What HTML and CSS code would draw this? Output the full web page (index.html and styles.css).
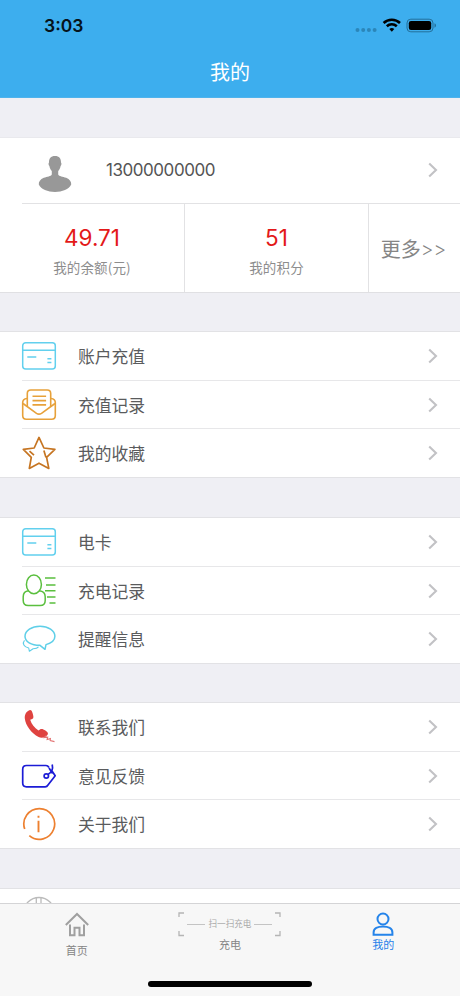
FILE: index.html
```html
<!DOCTYPE html>
<html lang="zh-CN">
<head>
<meta charset="utf-8">
<title>我的</title>
<link rel="stylesheet" href="styles.css">
</head>
<body>
<svg class="defs" width="0" height="0">
  <symbol id="chevron" viewBox="0 0 10 16"><path d="M1.200 1.400 8 8 1.200 14.600" fill="none" stroke="#c2c2c5" stroke-width="2.100"/></symbol>
  <symbol id="card" viewBox="0 0 36 36"><g fill="none" stroke="#62d0ee" stroke-width="1.500"><rect x="1.700" y="4.700" width="32.600" height="26.300" rx="3"/><path d="M1.700 12.300h32.600M6.300 18.900h9M26.400 20.800h4M26.400 24.500h4"/></g></symbol>
</svg>
<div class="screen">
  <header class="header">
    <div class="status">
      <span class="time">3:03</span>
      <svg class="status-icons" width="84" height="18" viewBox="0 0 84 18">
        <g fill="#2b86b9"><circle cx="4.500" cy="14" r="2"/><circle cx="10.200" cy="14" r="2"/><circle cx="15.900" cy="14" r="2"/><circle cx="21.600" cy="14" r="2"/></g>
        <g fill="none" stroke="#000" stroke-width="2.600"><path d="M30.600 7a12 12 0 0 1 16.400 0"/><path d="M33.800 10.300a7.300 7.300 0 0 1 10 0"/></g>
        <path d="M36.300 13a3.800 3.800 0 0 1 5 0l-2.500 2.700z"/>
        <rect x="54" y="3.200" width="26" height="12.600" rx="3.800" fill="none" stroke="#236f9a"/>
        <rect x="55.800" y="5" width="22.400" height="9" rx="2.200"/>
        <path d="M81.500 7.300q1.500.6 1.500 2.200t-1.500 2.200z" fill="#236f9a"/>
      </svg>
    </div>
    <h1 class="title">我的</h1>
  </header>
  <main class="content">
    <section class="account">
      <div class="profile">
        <svg class="avatar" width="34" height="38" viewBox="0 0 34 38"><path d="M17 1c4.200 0 6.200 2.700 6 6.500.8.600.5 3-.4 3.600-.3 2.300-1.200 3.600-2.400 4.900v3.400c1 2 4.500 2 8 3.400 3.500 1.300 5.300 4.200 5 6.700-2.200 4.700-9 7.400-16.200 7.400S3 34.200.8 29.500c-.3-2.500 1.500-5.400 5-6.700 3.500-1.400 7-1.400 8-3.400V16c-1.200-1.300-2.100-2.600-2.400-4.900-.9-.6-1.200-3-.4-3.600C10.800 3.700 12.800 1 17 1z" fill="#989898"/></svg>
        <span class="phone">13000000000</span>
        <svg class="chevron"><use href="#chevron"/></svg>
      </div>
      <div class="stats">
        <div class="stat"><strong class="value">49.71</strong><span class="label">我的余额(元)</span></div>
        <div class="stat"><strong class="value">51</strong><span class="label">我的积分</span></div>
        <div class="more">更多<span class="arrows">&gt;&gt;</span></div>
      </div>
    </section>

    <section class="group">
      <div class="row"><svg class="icon"><use href="#card"/></svg><span class="name">账户充值</span><svg class="chevron"><use href="#chevron"/></svg></div>
      <div class="row">
        <svg class="icon" viewBox="0 0 36 36"><g fill="none" stroke="#e7a13a" stroke-width="1.600" stroke-linejoin="round"><path d="M6.300 19.500V6.500q0-3.500 3.500-3.500h16.400q3.500 0 3.500 3.500v13"/><path d="M6 11.500q-4.300.5-4.300 4v13q0 3.700 3.700 3.700h25.200q3.700 0 3.700-3.700v-13q0-3.500-4.300-4"/><path d="M2 16.500 15.500 26.300q2.500 1.600 5 0L34 16.500M11.500 9.300h13.600M11.500 13.600h13.600M11.500 17.900h13.600"/></g></svg>
        <span class="name">充值记录</span><svg class="chevron"><use href="#chevron"/></svg>
      </div>
      <div class="row">
        <svg class="icon" viewBox="0 0 36 36"><path d="m18 2.400 4.900 10.600 11 1.400-8.300 8 2.200 11L18 28.200l-9.700 5.200 2-11-8-8 10.900-1.400zM8.500 16.200l4.500 4M22.900 15.500l2 6.700" fill="none" stroke="#c67522" stroke-width="1.700" stroke-linejoin="round"/></svg>
        <span class="name">我的收藏</span><svg class="chevron"><use href="#chevron"/></svg>
      </div>
    </section>

    <section class="group second">
      <div class="row"><svg class="icon"><use href="#card"/></svg><span class="name">电卡</span><svg class="chevron"><use href="#chevron"/></svg></div>
      <div class="row">
        <svg class="icon" viewBox="0 0 36 36"><g fill="none" stroke="#5abf3e" stroke-width="1.500"><ellipse cx="12.900" cy="11.400" rx="7.500" ry="9.300"/><path d="M7.500 17.800q-5.300.6-5.300 6v3.700q0 5 5 5h12q5 0 5-5v-3.700q0-5.400-6-6M24 5h10.500M25 12.100h9.500M24 17.800h10.500M26 24h8.500M28.500 30h6"/></g></svg>
        <span class="name">充电记录</span><svg class="chevron"><use href="#chevron"/></svg>
      </div>
      <div class="row">
        <svg class="icon" viewBox="0 0 36 36"><g fill="none" stroke="#5fcfe8" stroke-linejoin="round"><path d="M19 5.200c8.300 0 14.900 4.500 14.900 10.100 0 3.800-3.500 6.800-8.900 8.300l-1 4.700-5-4C10 24.300 4 20.800 4 15.300S10.700 5.200 19 5.200z" stroke-width="1.500"/><path d="M3.500 19.400c-2.500 3-.6 6.500 4.200 7.600l.7 3.300 3.700-2.500c2.500 0 4.500-.7 5.400-2" stroke-width="1.100"/></g></svg>
        <span class="name">提醒信息</span><svg class="chevron"><use href="#chevron"/></svg>
      </div>
    </section>

    <section class="group">
      <div class="row">
        <svg class="icon" viewBox="0 0 36 36"><path d="M8.500 1.200c1.600-.4 2.500.8 3.200 3.300.8 2.900 1.300 4.900-.5 5.600l-2 .7c1.400 4.400 4.200 7.900 8.300 10.800 1.400-1.600 3-2.100 4.900-1.200 2.900 1.300 5.400 3 4.300 5-1.200 2.600-5.500 4.400-9.100 2.700C10.500 24.200 4.700 16.800 3.800 9.500 3.500 5.500 5.300 2.300 8.500 1.200z" fill="#df4340"/><path d="m25.500 26.500-2.200 2 3.400-.3-.6 2.300 3.300-.9-.2 2 4.300 1" fill="none" stroke="#e37575" stroke-width="1.100"/></svg>
        <span class="name">联系我们</span><svg class="chevron"><use href="#chevron"/></svg>
      </div>
      <div class="row">
        <svg class="icon" viewBox="0 0 36 36"><g fill="none" stroke="#1c1cd6" stroke-width="1.700" stroke-linejoin="round"><path d="M28 9.500Q26.800 7.500 25 7.500H5.500q-3.800 0-3.800 3.800V25q0 3.800 3.800 3.800h18.700Q26 28.800 27 27l7.200-9.200L31 13"/><circle cx="25.300" cy="18" r="2.200"/><path d="M27 16.400q5.800-3 4.200-9.900M28 10l3.600 5.500"/></g></svg>
        <span class="name">意见反馈</span><svg class="chevron"><use href="#chevron"/></svg>
      </div>
      <div class="row">
        <svg class="icon" viewBox="0 0 36 36"><path d="M3.700 23A15.400 15.400 0 1 1 8.300 29.700" fill="none" stroke="#ed8030" stroke-width="1.700"/><path d="M17.500 14.800v11.500M17.500 9.700v2" fill="none" stroke="#ed8030" stroke-width="1.900"/></svg>
        <span class="name">关于我们</span><svg class="chevron"><use href="#chevron"/></svg>
      </div>
    </section>

    <section class="group last">
      <div class="row"><svg class="icon" viewBox="0 0 36 36"><g fill="none" stroke="#bbb" stroke-width="1.300"><circle cx="18" cy="18" r="15.500"/><path d="M15.300 3v30M20 3v30"/></g></svg></div>
    </section>
  </main>
  <nav class="tabs">
    <div class="tab home">
      <svg width="26" height="26" viewBox="0 0 26 26"><path d="M1.800 14 13 3l11.200 11M6 13.500v10.700h4.500v-7.400h5v7.400H20V13.500" fill="none" stroke="#a0a0a0" stroke-width="2"/></svg>
      <span>首页</span>
    </div>
    <div class="tab">
      <div class="scan">
        <svg class="corners" width="103" height="25" viewBox="0 0 103 25"><path d="M1 5V1h5M97 1h5v4M1 19v4.500h5M97 23.500h5V19" fill="none" stroke="#b5b5b5" stroke-width="1.300"/></svg>
        <span class="dash"></span><span class="scan-text">扫一扫充电</span><span class="dash"></span>
      </div>
      <span>充电</span>
    </div>
    <div class="tab active">
      <svg width="24" height="26" viewBox="0 0 24 26"><g fill="none" stroke="#2584ea" stroke-width="2"><circle cx="12" cy="8" r="5.500"/><path d="M2.600 23.700v-2.300c0-3.800 4.200-6 9.400-6s9.400 2.200 9.400 6v2.300z"/></g></svg>
      <span>我的</span>
    </div>
    <div class="indicator"></div>
  </nav>
</div>
</body>
</html>
```

FILE: styles.css
```css
* { box-sizing: border-box; }
body { margin: 0; font-family: Inter, "Noto Sans CJK SC", sans-serif; color: #666; }
.defs { position: absolute; }
.screen { width: 460px; height: 996px; display: flex; flex-direction: column; overflow: hidden; background: #efeff4; }
.header { flex: 0 0 98px; background: #3daeee; border-bottom: 1px solid #4fb3ec; }
.status { height: 48px; padding: 16px 23px 0 44px; display: flex; justify-content: space-between; align-items: flex-start; }
.time { font-size: 17.5px; line-height: 20px; font-weight: 600; color: #06131b; }
.status-icons { display: block; }
.title { margin: 0; padding-top: 2px; font-size: 20px; line-height: 47px; font-weight: 400; color: #fff; text-align: center; }
.content { flex: 1; min-height: 0; overflow: hidden; padding-top: 39px; }
.account { height: 156px; background: #fff; border-top: 1px solid #e9e9ed; border-bottom: 1px solid #e0e0e3; }
.profile { height: 66px; margin-left: 22px; padding: 0 22px 2px 16px; display: flex; align-items: center; border-bottom: 1px solid #e2e2e4; }
.avatar { margin-top: 8px; }
.phone { margin-left: 34px; flex: 1; font-size: 17px; letter-spacing: -0.45px; color: #555; }
.chevron { width: 10px; height: 16px; flex: none; }
.stats { height: 88px; display: grid; grid-template-columns: 185px 184px 1fr; }
.stat { border-right: 1px solid #e2e2e4; display: flex; flex-direction: column; align-items: center; padding-top: 20px; }
.value { font-size: 22.5px; line-height: 28px; font-weight: 400; color: #e31919; }
.label { margin-top: 5px; font-size: 13.5px; line-height: 20px; letter-spacing: 0.15px; color: #8d8d8d; font-weight: 400; font-family: "Noto Sans CJK SC", sans-serif; }
.more { display: flex; align-items: center; justify-content: center; font-size: 20px; color: #858585; font-family: "Noto Sans CJK SC", sans-serif; }
.arrows { font-family: Inter, sans-serif; font-weight: 300; font-size: 19.5px; padding-top: 2px; margin-right: 2px; }
.group { height: 147px; margin-top: 38px; background: #fff; border-top: 1px solid #e2e2e5; border-bottom: 1px solid #e2e2e5; display: flex; flex-direction: column; }
.group.second { margin-top: 39px; }
.row { flex: 1; margin-left: 22px; padding-right: 22px; display: flex; align-items: center; border-bottom: 1px solid #e7e7e9; }
.row:last-child { border-bottom: 0; }
.icon { width: 36px; height: 36px; margin-left: -1px; flex: none; }
.name { flex: 1; margin-left: 21px; font-size: 16.8px; font-weight: 400; color: #5a5b5d; }
.group.last { height: 49px; margin-top: 39px; }
.tabs { position: relative; flex: 0 0 93px; border-top: 1px solid #d4d4d6; background: #f7f7f7; display: grid; grid-template-columns: repeat(3, 1fr); padding-top: 7px; }
.tab { display: flex; flex-direction: column; align-items: center; font-size: 11px; line-height: 16px; color: #858585; }
.home span { margin-top: 6px; }
.active { color: #1f80ea; }
.scan { position: relative; width: 103px; height: 26px; display: flex; align-items: center; justify-content: center; gap: 3px; }
.corners { position: absolute; left: 0; top: 1px; }
.dash { width: 18px; height: 1px; background: #c4c4c4; }
.scan-text { font-size: 8.6px; color: #aaa; }
.indicator { position: absolute; left: 148px; bottom: 9px; width: 164px; height: 6px; border-radius: 3px; background: #000; }
```
